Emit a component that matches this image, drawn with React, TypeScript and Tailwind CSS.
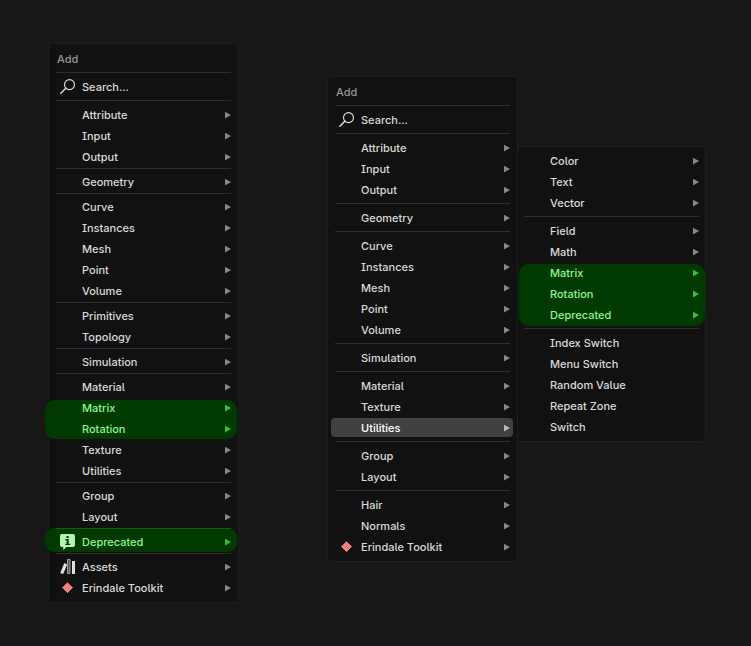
import { Fragment, type ReactNode } from "react";
import clsx from "clsx";

type IconName = "search" | "info" | "assets" | "diamond";

type Item = {
  label: string;
  icon?: IconName;
  leaf?: boolean;
  marked?: boolean;
  active?: boolean;
};

type Density = "compact" | "roomy";

const item = (label: string, extra: Partial<Item> = {}): Item => ({ label, ...extra });
const marked = (label: string, extra: Partial<Item> = {}): Item => ({ label, marked: true, ...extra });
const leaf = (label: string): Item => ({ label, leaf: true });

const oldMenu: Item[][] = [
  [item("Attribute"), item("Input"), item("Output")],
  [item("Geometry")],
  [item("Curve"), item("Instances"), item("Mesh"), item("Point"), item("Volume")],
  [item("Primitives"), item("Topology")],
  [item("Simulation")],
  [item("Material"), marked("Matrix"), marked("Rotation"), item("Texture"), item("Utilities")],
  [item("Group"), item("Layout")],
  [marked("Deprecated", { icon: "info" })],
  [item("Assets", { icon: "assets" }), item("Erindale Toolkit", { icon: "diamond" })],
];

const newMenu: Item[][] = [
  [item("Attribute"), item("Input"), item("Output")],
  [item("Geometry")],
  [item("Curve"), item("Instances"), item("Mesh"), item("Point"), item("Volume")],
  [item("Simulation")],
  [item("Material"), item("Texture"), item("Utilities", { active: true })],
  [item("Group"), item("Layout")],
  [item("Hair"), item("Normals"), item("Erindale Toolkit", { icon: "diamond" })],
];

const utilitiesMenu: Item[][] = [
  [item("Color"), item("Text"), item("Vector")],
  [item("Field"), item("Math"), marked("Matrix"), marked("Rotation"), marked("Deprecated")],
  [leaf("Index Switch"), leaf("Menu Switch"), leaf("Random Value"), leaf("Repeat Zone"), leaf("Switch")],
];

function Icon({ name }: { name: IconName }) {
  return (
    <svg width="16" height="16" viewBox="0 0 16 16" aria-hidden="true">
      {name === "search" && (
        <g fill="none" stroke="#e0e0e0" strokeLinecap="round">
          <circle cx="9.500" cy="5.600" r="5" strokeWidth="1.1" />
          <path d="M5.800 9.300 .8 14.300" strokeWidth="1.4" />
        </g>
      )}
      {name === "info" && (
        <>
          <path d="M2 0h11a2 2 0 0 1 2 2v9a2 2 0 0 1-2 2H6.500l-3.300 3v-3H2a2 2 0 0 1-2-2V2a2 2 0 0 1 2-2z" fill="#b4f5b4" />
          <path d="M6.500 2h2.200v2H6.500zM5.200 5h3.500v4.700h1.500V11h-5V9.700h1.400V6.300H5.200z" fill="#003c00" />
        </>
      )}
      {name === "assets" && (
        <>
          <path d="M4.300 4 7.200 5.500 3.200 15 .2 14z" fill="#e0e0e0" />
          <path d="M7.500 .5h2.500v14H7.500z" fill="#555" stroke="#a0a0a0" />
          <path d="M12 2h3v13h-3z" fill="#e0e0e0" />
        </>
      )}
      {name === "diamond" && (
        <path d="M7.500 1.700 13.500 7.700 7.500 13.700 1.500 7.700z" fill="#ee8080" stroke="#000" strokeWidth="1" />
      )}
    </svg>
  );
}

function Separator({ density, green }: { density: Density; green?: boolean }) {
  return (
    <div role="separator" className={clsx("relative z-10", density === "compact" ? "h-1 pt-px" : "h-[7px] pt-[3px]")}>
      <div className={clsx("h-px", green ? "bg-[#106010]" : "bg-[#2e2e2e]")} />
    </div>
  );
}

function Row({ data }: { data: Item }) {
  const { label, icon, leaf, marked, active } = data;
  return (
    <button
      type="button"
      className={clsx(
        "relative flex h-[21px] w-full items-center pt-px text-left",
        marked ? "text-[#90f590]" : active ? "text-white" : "text-[#d9d9d9]",
      )}
    >
      {active && <span className="absolute -left-1 -right-[3px] top-px bottom-px rounded bg-[#414141]" />}
      <span className="relative flex w-[26px] shrink-0 pl-1">{icon && <Icon name={icon} />}</span>
      <span className="relative grow whitespace-nowrap">{label}</span>
      {!leaf && (
        <svg
          width="6"
          height="8"
          viewBox="0 0 6 8"
          aria-hidden="true"
          className={clsx("relative", marked ? "fill-[#42b842]" : active ? "fill-[#b8b8b8]" : "fill-[#878787]")}
        >
          <path d="M0 .8 6 4.100 0 7.400z" />
        </svg>
      )}
    </button>
  );
}

function Section({ items, markClass }: { items: Item[]; markClass: string }) {
  const plainBefore = items.filter((_, i) => items.slice(0, i + 1).every((x) => !x.marked));
  const highlighted = items.filter((x) => x.marked);
  const plainAfter = items.slice(plainBefore.length + highlighted.length);
  return (
    <>
      {plainBefore.map((x) => <Row key={x.label} data={x} />)}
      {highlighted.length > 0 && (
        <div className="relative">
          <span className={clsx("absolute bg-[#003a00]", markClass)} />
          {highlighted.map((x) => <Row key={x.label} data={x} />)}
        </div>
      )}
      {plainAfter.map((x) => <Row key={x.label} data={x} />)}
    </>
  );
}

function Menu({
  label,
  sections,
  density,
  header,
  className,
}: {
  label: string;
  sections: Item[][];
  density: Density;
  header?: ReactNode;
  className?: string;
}) {
  return (
    <nav
      aria-label={label}
      className={clsx("shrink-0 rounded border border-[#1d1d1d] bg-[#111111] pb-1", className)}
    >
      {header}
      {sections.map((items, i) => {
        const alone = items.length === 1 && !!items[0].marked;
        return (
          <Fragment key={i}>
            {i > 0 && <Separator density={density} green={alone} />}
            <Section
              items={items}
              markClass={
                density === "roomy"
                  ? "-left-[5px] -right-[6px] top-[2px] -bottom-px rounded-[10px]"
                  : alone
                    ? "-left-[11px] -right-[6px] -top-[3px] bottom-0 rounded-[9px]"
                    : "-left-[11px] -right-[6px] top-[3px] bottom-0 rounded-[10px]"
              }
            />
          </Fragment>
        );
      })}
    </nav>
  );
}

function AddHeader() {
  return (
    <>
      <h2 className="flex h-[21px] items-center pt-px pl-px text-[#959595]">Add</h2>
      <Separator density="roomy" />
      <Row data={{ label: "Search...", icon: "search", leaf: true }} />
      <Separator density="roomy" />
    </>
  );
}

export default function App() {
  return (
    <main className="flex min-h-screen items-start overflow-x-auto bg-[#171717] pl-12 font-['Inter','Liberation_Sans',sans-serif] text-[11px] leading-5 font-medium [font-feature-settings:'cv08','ss02']">
      <Menu
        label="Add, before"
        sections={oldMenu}
        density="compact"
        header={<AddHeader />}
        className="mt-[43px] w-[191px] px-[7px] pt-1"
      />
      <div className="ml-[88px] mt-[76px] flex shrink-0 items-start">
        <Menu
          label="Add, after"
          sections={newMenu}
          density="roomy"
          header={<AddHeader />}
          className="w-[191px] px-[7px] pt-1"
        />
        <Menu
          label="Utilities"
          sections={utilitiesMenu}
          density="roomy"
          className="-ml-px mt-[70px] w-[189px] pt-[3px] pl-[6px] pr-[6px]"
        />
      </div>
    </main>
  );
}
